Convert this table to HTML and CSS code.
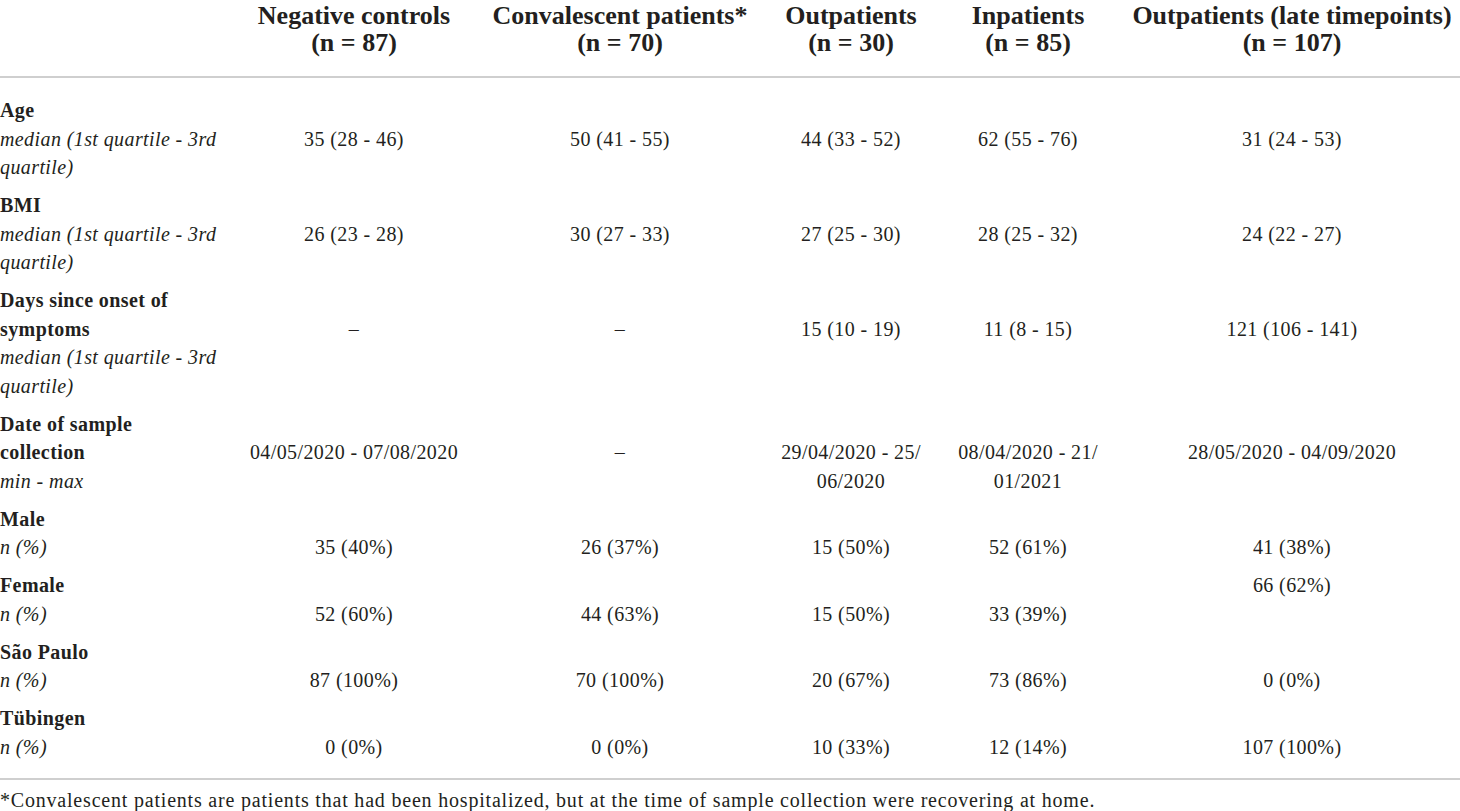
FILE: index.html
```html
<!DOCTYPE html>
<html lang="en">
<head>
  <meta charset="UTF-8">
  <title>Table 1 - Cohort characteristics</title>
  <link rel="stylesheet" href="styles.css">
</head>
<body>
  <table class="cohort">
    <colgroup>
      <col class="c-label">
      <col class="c-neg">
      <col class="c-conv">
      <col class="c-out">
      <col class="c-in">
      <col class="c-late">
    </colgroup>
    <thead>
      <tr>
        <th></th>
        <th>Negative controls<br>(n = 87)</th>
        <th>Convalescent patients*<br>(n = 70)</th>
        <th>Outpatients<br>(n = 30)</th>
        <th>Inpatients<br>(n = 85)</th>
        <th>Outpatients (late timepoints)<br>(n = 107)</th>
      </tr>
    </thead>
    <tbody>
      <tr>
        <td class="label"><b>Age</b><i>median (1st quartile - 3rd<br>quartile)</i></td>
        <td class="val">35 (28 - 46)</td>
        <td class="val">50 (41 - 55)</td>
        <td class="val">44 (33 - 52)</td>
        <td class="val">62 (55 - 76)</td>
        <td class="val">31 (24 - 53)</td>
      </tr>
      <tr>
        <td class="label"><b>BMI</b><i>median (1st quartile - 3rd<br>quartile)</i></td>
        <td class="val">26 (23 - 28)</td>
        <td class="val">30 (27 - 33)</td>
        <td class="val">27 (25 - 30)</td>
        <td class="val">28 (25 - 32)</td>
        <td class="val">24 (22 - 27)</td>
      </tr>
      <tr>
        <td class="label"><b>Days since onset of<br>symptoms</b><i>median (1st quartile - 3rd<br>quartile)</i></td>
        <td class="val">–</td>
        <td class="val">–</td>
        <td class="val">15 (10 - 19)</td>
        <td class="val">11 (8 - 15)</td>
        <td class="val">121 (106 - 141)</td>
      </tr>
      <tr>
        <td class="label"><b>Date of sample<br>collection</b><i>min - max</i></td>
        <td class="val">04/05/2020 - 07/08/2020</td>
        <td class="val">–</td>
        <td class="val">29/04/2020 - 25/<br>06/2020</td>
        <td class="val">08/04/2020 - 21/<br>01/2021</td>
        <td class="val">28/05/2020 - 04/09/2020</td>
      </tr>
      <tr>
        <td class="label"><b>Male</b><i>n (%)</i></td>
        <td class="val">35 (40%)</td>
        <td class="val">26 (37%)</td>
        <td class="val">15 (50%)</td>
        <td class="val">52 (61%)</td>
        <td class="val">41 (38%)</td>
      </tr>
      <tr>
        <td class="label"><b>Female</b><i>n (%)</i></td>
        <td class="val">52 (60%)</td>
        <td class="val">44 (63%)</td>
        <td class="val">15 (50%)</td>
        <td class="val">33 (39%)</td>
        <td>66 (62%)</td>
      </tr>
      <tr>
        <td class="label"><b>São Paulo</b><i>n (%)</i></td>
        <td class="val">87 (100%)</td>
        <td class="val">70 (100%)</td>
        <td class="val">20 (67%)</td>
        <td class="val">73 (86%)</td>
        <td class="val">0 (0%)</td>
      </tr>
      <tr>
        <td class="label"><b>Tübingen</b><i>n (%)</i></td>
        <td class="val">0 (0%)</td>
        <td class="val">0 (0%)</td>
        <td class="val">10 (33%)</td>
        <td class="val">12 (14%)</td>
        <td class="val">107 (100%)</td>
      </tr>
    </tbody>
  </table>
  <p class="note">*Convalescent patients are patients that had been hospitalized, but at the time of sample collection were recovering at home.</p>
</body>
</html>
```

FILE: styles.css
```css
body {
  margin: 0;
  background-color: white;
  color: #231f20;
  font-family: "Liberation Serif", "Times New Roman", serif;
}
.cohort {
  width: 1460px;
  border-collapse: collapse;
  table-layout: fixed;
}
.c-label { width: 238px; }
.c-neg { width: 232px; }
.c-conv { width: 300px; }
.c-out { width: 162px; }
.c-in { width: 192px; }
.c-late { width: 336px; }
.cohort th {
  font-size: 26px;
  font-weight: bold;
  line-height: 27px;
  text-align: center;
  padding: 2px 0 20px;
  border-bottom: 2px solid #cfcfcf;
}
.cohort td {
  font-size: 20px;
  letter-spacing: 0.4px;
  line-height: 28.5px;
  text-align: center;
  vertical-align: top;
  padding: 9.5px 0 0;
}
.cohort tbody tr:first-child td {
  padding-top: 18px;
}
.cohort tbody tr:last-child td {
  padding-bottom: 17px;
  border-bottom: 2px solid #cfcfcf;
}
.cohort td.label {
  text-align: left;
}
.label b,
.label i {
  display: block;
}
.cohort td.val {
  padding-top: 38px;
}
.cohort tbody tr:first-child td.val {
  padding-top: 46.5px;
}
.note {
  margin: 8px 0 0;
  font-size: 20px;
  letter-spacing: 0.8px;
  line-height: 24px;
}
```
